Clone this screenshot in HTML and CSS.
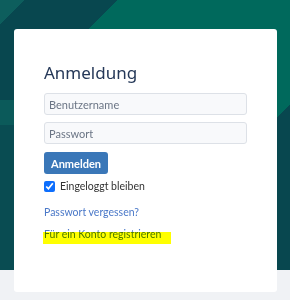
FILE: index.html
```
<!DOCTYPE html>
<html lang="de">
<head>
  <meta charset="UTF-8" />
  <title>Anmeldung</title>
  <meta name="viewport" content="width=device-width, initial-scale=1.0" />
  <link rel="stylesheet" href="styles.css">
</head>
<body>

  <!-- Login Card -->
  <div class="login-card">
    <h1 class="login-title">Anmeldung</h1>
    <form class="login-form" onsubmit="return false;">
      <input type="text" class="login-input" placeholder="Benutzername" />
      <input type="password" class="login-input" placeholder="Passwort" />
      <button type="submit" class="login-button">Anmelden</button>
      <label class="remember">
        <input type="checkbox" checked />
        <span>Eingeloggt bleiben</span>
      </label>
    </form>
    <a href="#" class="login-link">Passwort vergessen?</a>
    <a href="#" class="login-link register">Für ein Konto registrieren</a>
  </div>

</body>
</html>
```

FILE: styles.css
```
body {
  margin: 0;
  padding: 29px 13px 0 14px;
  font-family: Lato, "Noto Sans", Arial, sans-serif;
  background-color: #f0f2f5;
  background-image:
    linear-gradient(#094c52, #094c52),
    linear-gradient(#0b5a5a, #0b5a5a),
    linear-gradient(135deg, #0d5e5d 0 17px, transparent 17px 83px, #00695c 83px 279px, transparent 279px),
    linear-gradient(#08474f, #08474f);
  background-size: 14px 145px, 14px 25px, 100% 270px, 100% 270px;
  background-position: 0 125px, 0 100px, 0 0, 0 0;
  background-repeat: no-repeat;
}

/* Login Card */
.login-card {
  background-color: white;
  border-radius: 3px;
  height: 263px;
  box-sizing: border-box;
  padding: 32px 30px 0 30px;
}

.login-title {
  margin: 0 0 8px 0;
  font-family: "Noto Sans", Arial, sans-serif;
  font-size: 17px;
  font-weight: normal;
  color: #253858;
  line-height: 24px;
}

.login-form {
  display: flex;
  flex-direction: column;
  align-items: flex-start;
}

.login-input {
  box-sizing: border-box;
  width: 203px;
  height: 22px;
  margin: 0 0 7px 0;
  padding: 0 4px;
  border: 1px solid #dde1e7;
  border-radius: 3px;
  background-color: #f8f9fb;
  font-family: inherit;
  font-size: 11px;
}

.login-input::placeholder {
  color: #6b7585;
}

.login-button {
  height: 22px;
  margin-top: 1px;
  padding: 0 7px;
  background-color: #3a77b8;
  color: white;
  border: none;
  border-radius: 3px;
  font-family: inherit;
  font-size: 11px;
  font-weight: bold;
}

.remember {
  display: flex;
  align-items: center;
  gap: 5px;
  margin-top: 6px;
  font-size: 10.5px;
  color: #333;
}

.remember input {
  width: 11px;
  height: 11px;
  margin: 0;
  accent-color: #0d6efd;
}

.login-link {
  display: block;
  width: max-content;
  margin-top: 14px;
  font-size: 10.5px;
  color: #4a78c8;
  text-decoration: none;
}

.register {
  position: relative;
  margin-top: 10px;
}

.register::after {
  content: "";
  position: absolute;
  left: -1px;
  right: -10px;
  top: 4px;
  bottom: -4px;
  background-color: #ffff00;
  mix-blend-mode: multiply;
}
```
